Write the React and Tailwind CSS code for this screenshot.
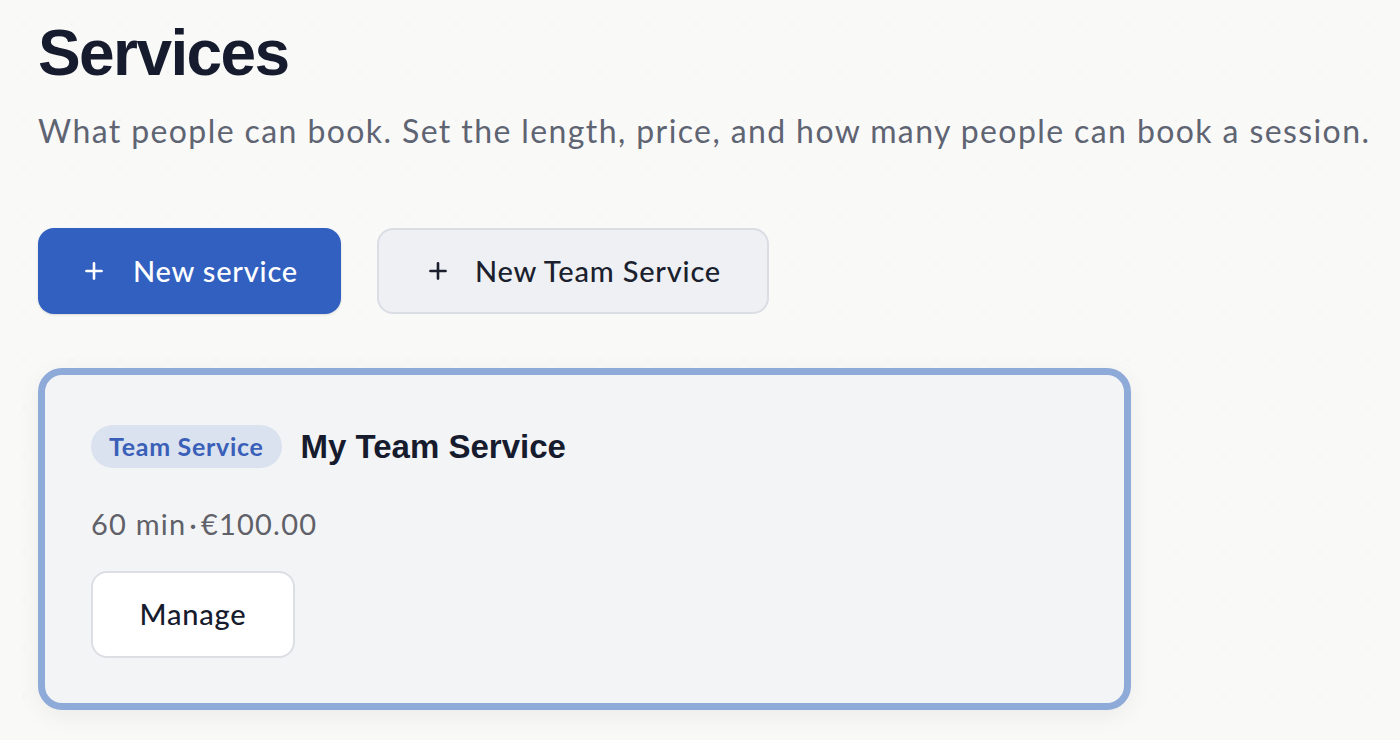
import { Plus } from "lucide-react";

const body = { fontFamily: "Lato, 'Open Sans', sans-serif" };
const head = { fontFamily: "'Liberation Sans', Arial, sans-serif" };

const App = () => {
  return (
    <div
      className="min-h-screen bg-[#f9f9f8] bg-[radial-gradient(circle,#eeeff1_1.5px,transparent_1.5px)] bg-[size:48px_48px] pl-[38px] pt-[21px]"
      style={body}
    >
      {/* Header */}
      <h1 className="text-[64px] leading-none font-bold tracking-tight text-[#161b2e]" style={head}>
        Services
      </h1>
      <p className="mt-[25px] text-[32px] leading-[42px] tracking-[1.4px] text-[#5f6473]">
        What people can book. Set the length, price, and how many people can book a session.
      </p>

      {/* Actions */}
      <div className="mt-[76px] flex gap-[36px]">
        <button className="flex h-[86px] w-[303px] items-center justify-center gap-[26px] rounded-[16px] bg-[#3160c0] text-[29px] font-medium tracking-[0.8px] text-white shadow-sm">
          <Plus size={26} strokeWidth={2.4} />
          New service
        </button>
        <button className="flex h-[86px] w-[392px] items-center justify-center gap-[24px] rounded-[16px] border-2 border-[#dadde3] bg-[#eef0f4] text-[29px] font-medium tracking-[0.8px] text-[#1b1f2e]">
          <Plus size={26} strokeWidth={2.4} />
          New Team Service
        </button>
      </div>

      {/* Service card */}
      <div className="mt-[54px] w-[1093px] rounded-[24px] border-[7px] border-[#8eaad8] bg-[#f3f4f6] pl-[46px] pt-[47px] pb-[45px] shadow-[0_6px_24px_rgb(0_0_0/0.06)]">
        <div className="flex items-center gap-[19px]">
          <span className="flex h-[43px] items-center rounded-full bg-[#dae2ef] px-[18px] text-[25px] font-bold tracking-[0.7px] text-[#3a5fb8]">
            Team Service
          </span>
          <span className="text-[33px] font-bold text-[#161b2e]" style={head}>
            My Team Service
          </span>
        </div>
        <p className="mt-[34px] text-[29px] leading-[36px] tracking-[1.2px] text-[#5f6068]">
          60 min<span className="mx-[3px]">·</span>€100.00
        </p>
        <button className="mt-[29px] flex h-[87px] w-[204px] items-center justify-center rounded-[16px] border-2 border-[#dcdee3] bg-white text-[29px] font-medium tracking-[0.8px] text-[#161b2e]">
          Manage
        </button>
      </div>
    </div>
  );
};

export default App;
